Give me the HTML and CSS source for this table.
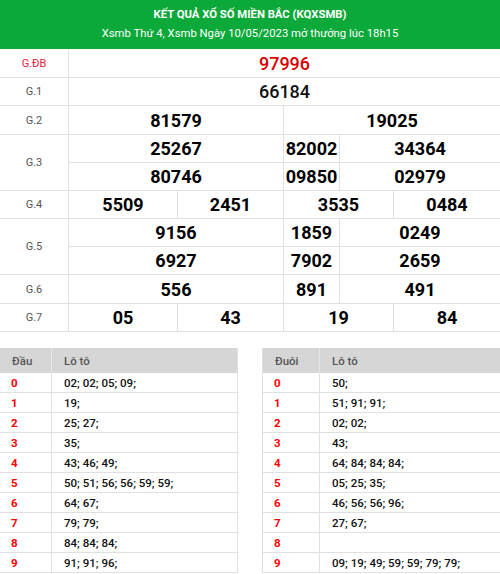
FILE: index.html
```html
<!DOCTYPE html>
<html lang="vi">
<head>
<meta charset="utf-8">
<title>KQXSMB</title>
<link rel="stylesheet" href="styles.css">
</head>
<body>
<div class="page">
  <header class="banner">
    <h1 class="banner-title">KẾT QUẢ XỔ SỐ MIỀN BẮC (KQXSMB)</h1>
    <p class="banner-sub">Xsmb Thứ 4, Xsmb Ngày 10/05/2023 mở thưởng lúc 18h15</p>
  </header>

  <div class="results">
    <div class="lbl lbl-db r1">G.ĐB</div>
    <div class="num num-db r1 c-all">97996</div>

    <div class="lbl r2">G.1</div>
    <div class="num num-mid r2 c-all">66184</div>

    <div class="lbl r3">G.2</div>
    <div class="num r3 c-a12">81579</div>
    <div class="num r3 c-a345">19025</div>

    <div class="lbl r45">G.3</div>
    <div class="num r4 c-a12">25267</div>
    <div class="num r4 c-a3">82002</div>
    <div class="num r4 c-a45">34364</div>
    <div class="num r5 c-a12">80746</div>
    <div class="num r5 c-a3">09850</div>
    <div class="num r5 c-a45">02979</div>

    <div class="lbl r6">G.4</div>
    <div class="num r6 c-a1">5509</div>
    <div class="num r6 c-a2">2451</div>
    <div class="num r6 c-a34">3535</div>
    <div class="num r6 c-a5">0484</div>

    <div class="lbl r78">G.5</div>
    <div class="num r7 c-a12">9156</div>
    <div class="num r7 c-a3">1859</div>
    <div class="num r7 c-a45">0249</div>
    <div class="num r8 c-a12">6927</div>
    <div class="num r8 c-a3">7902</div>
    <div class="num r8 c-a45">2659</div>

    <div class="lbl r9">G.6</div>
    <div class="num r9 c-a12">556</div>
    <div class="num r9 c-a3">891</div>
    <div class="num r9 c-a45">491</div>

    <div class="lbl r10">G.7</div>
    <div class="num r10 c-a1">05</div>
    <div class="num r10 c-a2">43</div>
    <div class="num r10 c-a34">19</div>
    <div class="num r10 c-a5">84</div>
  </div>

  <div class="loto-wrap">
    <div class="loto loto-left">
      <div class="lh">Đầu</div><div class="lh">Lô tô</div>
      <div class="lk">0</div><div class="lv">02; 02; 05; 09;</div>
      <div class="lk">1</div><div class="lv">19;</div>
      <div class="lk">2</div><div class="lv">25; 27;</div>
      <div class="lk">3</div><div class="lv">35;</div>
      <div class="lk">4</div><div class="lv">43; 46; 49;</div>
      <div class="lk">5</div><div class="lv">50; 51; 56; 56; 59; 59;</div>
      <div class="lk">6</div><div class="lv">64; 67;</div>
      <div class="lk">7</div><div class="lv">79; 79;</div>
      <div class="lk">8</div><div class="lv">84; 84; 84;</div>
      <div class="lk">9</div><div class="lv">91; 91; 96;</div>
    </div>
    <div class="loto loto-right">
      <div class="lh">Đuôi</div><div class="lh">Lô tô</div>
      <div class="lk">0</div><div class="lv">50;</div>
      <div class="lk">1</div><div class="lv">51; 91; 91;</div>
      <div class="lk">2</div><div class="lv">02; 02;</div>
      <div class="lk">3</div><div class="lv">43;</div>
      <div class="lk">4</div><div class="lv">64; 84; 84; 84;</div>
      <div class="lk">5</div><div class="lv">05; 25; 35;</div>
      <div class="lk">6</div><div class="lv">46; 56; 56; 96;</div>
      <div class="lk">7</div><div class="lv">27; 67;</div>
      <div class="lk">8</div><div class="lv"></div>
      <div class="lk">9</div><div class="lv">09; 19; 49; 59; 59; 79; 79;</div>
    </div>
  </div>
</div>
</body>
</html>
```

FILE: styles.css
```css
* { box-sizing: border-box; }
html, body { margin: 0; padding: 0; background: #fff; }
body { font-family: Roboto, "Liberation Sans", Arial, sans-serif; color: #000; }
.page { width: 500px; overflow: hidden; }

.banner {
  background: #0ba83a;
  height: 49px;
  color: #fff;
  text-align: center;
  padding-top: 7px;
}
.banner-title { margin: 0; font-size: 11.3px; font-weight: 700; line-height: 16px; }
.banner-sub { margin: 2px 0 0; font-size: 11.3px; font-weight: 400; line-height: 18px; }

.results {
  margin-top: 1px;
  display: grid;
  grid-template-columns: 68px 108px 105px 55px 53px 106px;
  grid-template-rows: 27px 27px 28px 27px 27px 27px 27px 27px 28px 27px;
  gap: 1px;
  background: #e0e0e0;
  padding-bottom: 1px;
}
.results > div { background: #fff; display: flex; align-items: center; justify-content: center; }
.lbl { grid-column: 1; font-size: 11px; color: #555; }
.lbl-db { color: #e8203a; }
.num { font-size: 18px; font-weight: 700; color: #000; }
.num-db { font-weight: 500; color: #d90000; }
.num-mid { font-weight: 500; color: #111; }

.r1 { grid-row: 1; } .r2 { grid-row: 2; } .r3 { grid-row: 3; }
.r4 { grid-row: 4; } .r5 { grid-row: 5; } .r45 { grid-row: 4 / span 2; }
.r6 { grid-row: 6; } .r7 { grid-row: 7; } .r8 { grid-row: 8; } .r78 { grid-row: 7 / span 2; }
.r9 { grid-row: 9; } .r10 { grid-row: 10; }

.c-all { grid-column: 2 / 7; }
.c-a12 { grid-column: 2 / 4; }
.c-a345 { grid-column: 4 / 7; }
.c-a3 { grid-column: 4 / 5; }
.c-a45 { grid-column: 5 / 7; }
.c-a1 { grid-column: 2 / 3; }
.c-a2 { grid-column: 3 / 4; }
.c-a34 { grid-column: 4 / 6; }
.c-a5 { grid-column: 6 / 7; }

.loto-wrap {
  margin-top: 16px;
  display: flex;
  gap: 24px;
}
.loto {
  width: 238px;
  display: grid;
  grid-template-rows: 25px;
  grid-auto-rows: 20px;
  font-size: 11.5px;
}
.loto-left { grid-template-columns: 51px 1fr; border-right: 1px solid #e0e0e0; }
.loto-right { grid-template-columns: 56px 1fr; border-left: 1px solid #e0e0e0; }
.loto > div { display: flex; align-items: center; }
.lh { background: #d6d6d6; color: #555; font-weight: 500; padding-left: 12px; }
.lh:nth-child(2) { border-left: 1px solid #e6e6e6; }
.lk, .lv { border-bottom: 1px solid #e0e0e0; }
.lk { color: #f00; font-weight: 700; padding-left: 11px; }
.lv { border-left: 1px solid #e0e0e0; padding-left: 12px; font-weight: 500; color: #111; }
```
